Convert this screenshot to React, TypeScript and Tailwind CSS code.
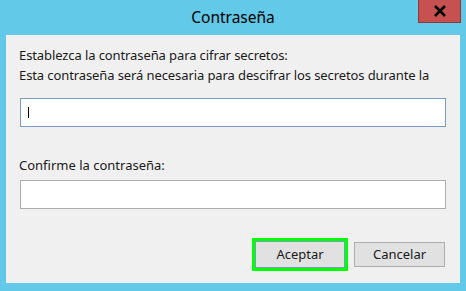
export default function App() {
  return (
    <div className="w-[466px] h-[291px] bg-[#63c9e9] flex flex-col font-['Noto_Sans',sans-serif] text-[#1a1a1a] overflow-hidden">
      <header className="h-[35px] relative flex items-center justify-center shrink-0">
        <span className="text-[15.5px] text-black pt-[1px]">Contraseña</span>
        <button className="absolute right-[5px] top-0 w-[43px] h-[23px] bg-[#c75050] border border-[#8a3a3a] border-t-0 flex items-center justify-center">
          <svg width="14" height="12" viewBox="0 0 14 12">
            <path d="M2 1 L12 11 M12 1 L2 11" stroke="#000" strokeWidth="2.6" />
          </svg>
        </button>
      </header>

      <main className="mx-[6px] mb-[8px] flex-1 bg-[#f0f0f0] flex flex-col px-[14px] pt-[10px]">
        <p className="text-[13px] leading-[20px] ml-[-1px] tracking-[-0.1px]">
          Establezca la contraseña para cifrar secretos:
          <br />
          Esta contraseña será necesaria para descifrar los secretos durante la
        </p>
        <div className="mt-[13px] h-[29px] bg-white border border-[#7a9cc0] flex items-center px-[7px]">
          <div className="w-px h-[11px] bg-black" />
        </div>

        <label className="text-[13px] leading-[20px] mt-[28px] ml-[-1px]">Confirme la contraseña:</label>
        <div className="mt-[5px] h-[29px] bg-white border border-[#acacac]" />

        <div className="mt-[29px] flex justify-end items-center gap-[6px] pr-[1px]">
          <div className="border-[3px] border-[#00ff00] p-0">
            <button className="w-[90px] h-[27px] bg-[#e1e1e1] border border-[#7a9cc0] text-[13px] text-[#1a1a1a]">
              Aceptar
            </button>
          </div>
          <button className="w-[91px] h-[25px] bg-[#e1e1e1] border border-[#adadad] text-[13px] text-[#1a1a1a]">
            Cancelar
          </button>
        </div>
      </main>
    </div>
  );
}
